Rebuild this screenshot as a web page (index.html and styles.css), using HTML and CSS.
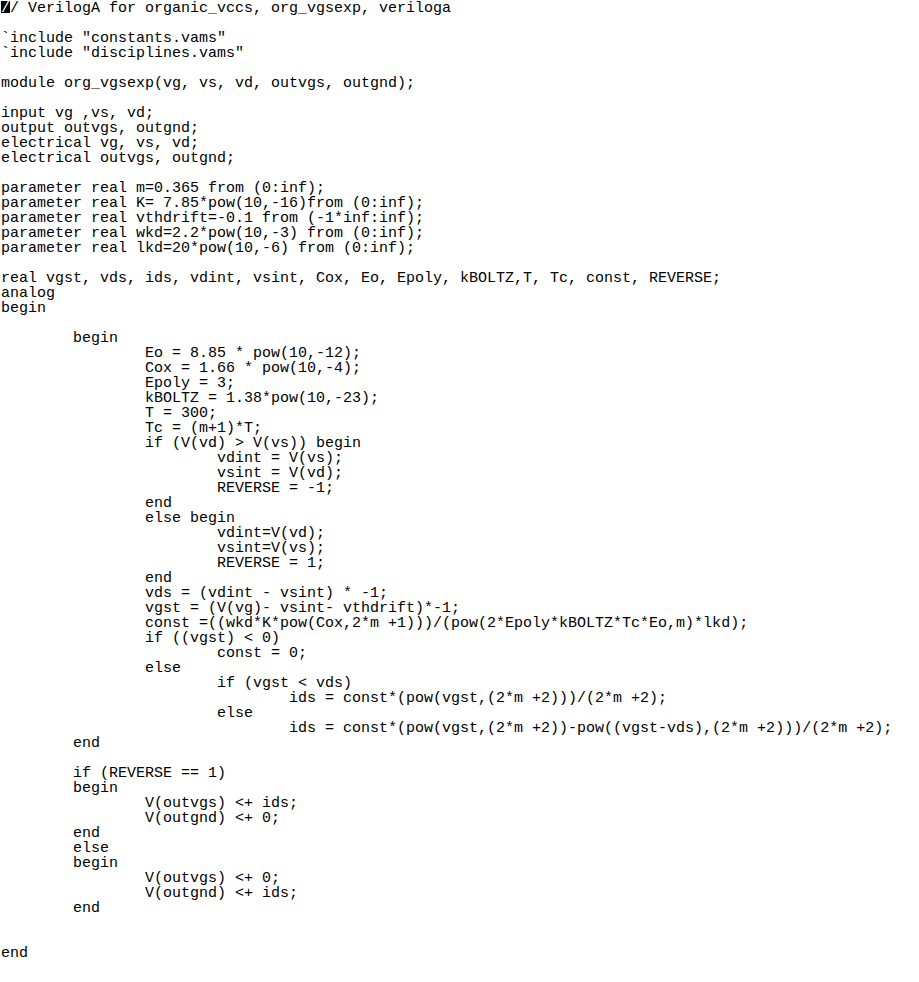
FILE: index.html
```html
<!DOCTYPE html>
<html>
<head>
<meta charset="utf-8">
<link rel="stylesheet" href="styles.css">
</head>
<body>
<pre class="code"><span class="cursor">/</span>/ VerilogA for organic_vccs, org_vgsexp, veriloga

`include "constants.vams"
`include "disciplines.vams"

module org_vgsexp(vg, vs, vd, outvgs, outgnd);

input vg ,vs, vd;
output outvgs, outgnd;
electrical vg, vs, vd;
electrical outvgs, outgnd;

parameter real m=0.365 from (0:inf);
parameter real K= 7.85*pow(10,-16)from (0:inf);
parameter real vthdrift=-0.1 from (-1*inf:inf);
parameter real wkd=2.2*pow(10,-3) from (0:inf);
parameter real lkd=20*pow(10,-6) from (0:inf);

real vgst, vds, ids, vdint, vsint, Cox, Eo, Epoly, kBOLTZ,T, Tc, const, REVERSE;
analog
begin

	begin
		Eo = 8.85 * pow(10,-12);
		Cox = 1.66 * pow(10,-4);
		Epoly = 3;
		kBOLTZ = 1.38*pow(10,-23);
		T = 300;
		Tc = (m+1)*T;
		if (V(vd) &gt; V(vs)) begin
			vdint = V(vs);
			vsint = V(vd);
			REVERSE = -1;
		end
		else begin
			vdint=V(vd);
			vsint=V(vs);
			REVERSE = 1;
		end
		vds = (vdint - vsint) * -1;
		vgst = (V(vg)- vsint- vthdrift)*-1;
		const =((wkd*K*pow(Cox,2*m +1)))/(pow(2*Epoly*kBOLTZ*Tc*Eo,m)*lkd);
		if ((vgst) &lt; 0)
			const = 0;
		else
			if (vgst &lt; vds)
				ids = const*(pow(vgst,(2*m +2)))/(2*m +2);
			else
				ids = const*(pow(vgst,(2*m +2))-pow((vgst-vds),(2*m +2)))/(2*m +2);
	end

	if (REVERSE == 1)
	begin
		V(outvgs) &lt;+ ids;
		V(outgnd) &lt;+ 0;
	end
	else
	begin
		V(outvgs) &lt;+ 0;
		V(outgnd) &lt;+ ids;
	end


end
</pre>
</body>
</html>
```

FILE: styles.css
```css
html, body {
  margin: 0;
  padding: 0;
  background: #ffffff;
}

.code {
  margin: 0;
  padding: 1px 0 0 1px;
  font-family: "Liberation Mono", "DejaVu Sans Mono", monospace;
  font-size: 15px;
  line-height: 15px;
  tab-size: 8;
  -moz-tab-size: 8;
  color: #000000;
  white-space: pre;
}

.cursor {
  position: relative;
  z-index: 0;
  color: #ffffff;
}

.cursor::before {
  content: "";
  position: absolute;
  left: 0;
  top: 1px;
  width: 9px;
  height: 12px;
  background: #000000;
  z-index: -1;
}
```
